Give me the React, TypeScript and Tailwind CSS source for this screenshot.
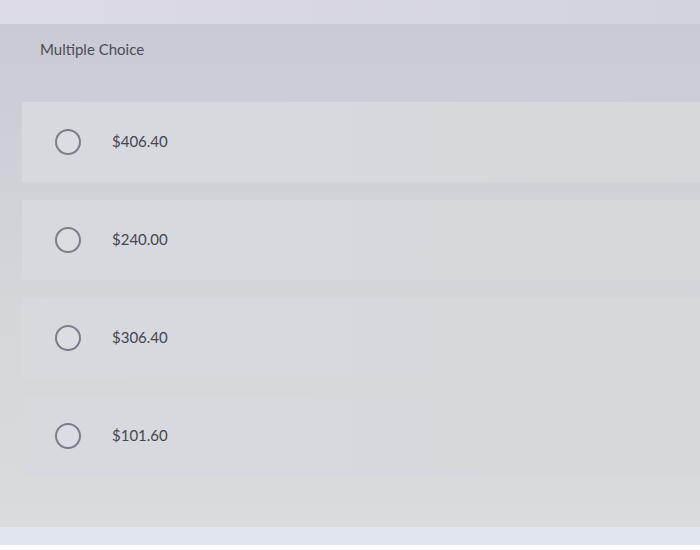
const options = ["$406.40", "$240.00", "$306.40", "$101.60"];

export default function App() {
  return (
    <div className="flex h-[550px] w-[700px] flex-col overflow-hidden bg-[#f4f6f8] font-['Lato','Open_Sans',sans-serif]">
      <div className="h-[24px] bg-gradient-to-r from-[#dcdbe6] to-[#d3d3dc]" />
      <div className="flex flex-1 flex-col bg-gradient-to-b from-[#c9cad4] via-[#d3d5da] to-[#d9dbdd] pb-[44px]">
        <p className="pl-[40px] pt-[14px] text-[15px] text-[#4c4c55]">Multiple Choice</p>
        <div className="mt-[41px] flex flex-col gap-[18px] pl-[22px]">
          {options.map((o) => (
            <label
              key={o}
              className="flex h-[80px] items-center gap-[31px] bg-gradient-to-r from-[#d8d9df] to-[#d6d8dc] pl-[33px]"
            >
              <span className="h-[26px] w-[26px] rounded-full border-2 border-[#7a7e8a] bg-[#dcdde2]" />
              <span className="text-[15px] text-[#45454d]">{o}</span>
            </label>
          ))}
        </div>
      </div>
      <div className="h-[18px] bg-[#e1e6ec]" />
      <div className="h-[5px] bg-white" />
    </div>
  );
}
